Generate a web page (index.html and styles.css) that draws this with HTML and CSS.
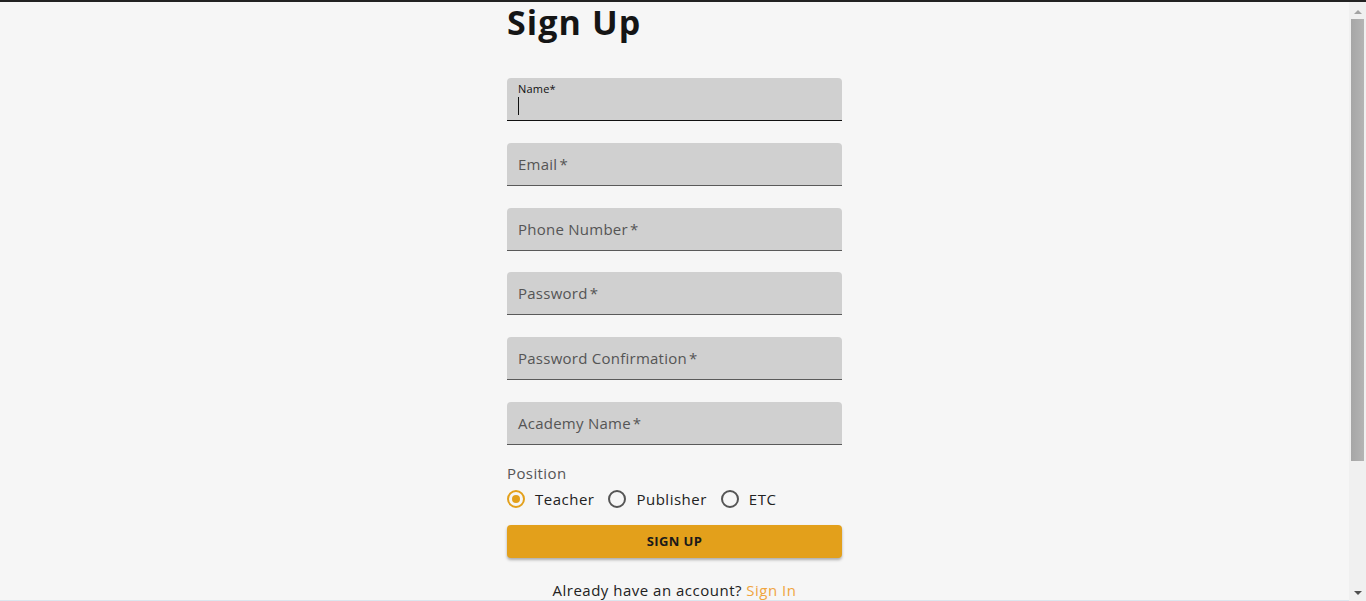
FILE: index.html
```html
<!DOCTYPE html>
<html>
<head>
<meta charset="utf-8">
<link rel="stylesheet" href="styles.css">
</head>
<body>
<div class="topline"></div>
<div class="frame">
  <div class="page">
    <div class="form">
      <h1 class="title">Sign Up</h1>
      <div class="fields">
        <div class="field focused">
          <span class="small-label">Name*</span>
          <span class="caret"></span>
        </div>
        <div class="field"><span class="label">Email<span class="ast">*</span></span></div>
        <div class="field"><span class="label">Phone Number<span class="ast">*</span></span></div>
        <div class="field"><span class="label">Password<span class="ast">*</span></span></div>
        <div class="field"><span class="label">Password Confirmation<span class="ast">*</span></span></div>
        <div class="field"><span class="label">Academy Name<span class="ast">*</span></span></div>
      </div>
      <div class="position">Position</div>
      <div class="radios">
        <label class="radio"><span class="dot checked"></span><span>Teacher</span></label>
        <label class="radio"><span class="dot"></span><span>Publisher</span></label>
        <label class="radio"><span class="dot"></span><span>ETC</span></label>
      </div>
      <button class="submit">SIGN UP</button>
      <p class="already">Already have an account? <a class="signin">Sign In</a></p>
    </div>
  </div>
  <div class="scrollbar">
    <div class="arrow up"></div>
    <div class="thumb"></div>
    <div class="arrow down"></div>
  </div>
</div>
</body>
</html>
```
FILE: styles.css
```css
html, body {
  margin: 0;
  padding: 0;
  height: 601px;
  overflow: hidden;
}
body {
  background: #f6f6f6;
  font-family: "Open Sans", "Liberation Sans", sans-serif;
  color: #222;
}
.topline {
  height: 2px;
  background: #222;
}
.frame {
  display: flex;
  height: 599px;
}
.page {
  flex: 1;
  display: flex;
  justify-content: center;
  border-bottom: 1px solid #dbe6ee;
  box-sizing: border-box;
}
.form {
  width: 335px;
}
.title {
  margin: 0;
  font-size: 34px;
  font-weight: 700;
  line-height: 40px;
  color: #151515;
  letter-spacing: 1.1px;
}
.fields {
  margin-top: 36px;
  display: flex;
  flex-direction: column;
  gap: 21.8px;
}
.field {
  position: relative;
  height: 42px;
  background: #d0d0d0;
  border-radius: 4px 4px 0 0;
  border-bottom: 1px solid #5a5a5a;
  display: flex;
  align-items: center;
  padding-left: 11px;
}
.field.focused {
  border-bottom: 1px solid #111;
  display: block;
}
.label {
  font-size: 15px;
  color: #555;
  letter-spacing: 0.25px;
}
.ast {
  margin-left: 2px;
}
.small-label {
  position: absolute;
  left: 11px;
  top: 3px;
  font-size: 11px;
  color: #111;
  letter-spacing: 0.2px;
}
.caret {
  position: absolute;
  left: 11px;
  top: 19px;
  width: 1px;
  height: 18px;
  background: #111;
}
.position {
  margin-top: 18px;
  font-size: 15px;
  color: #555;
  line-height: 20px;
  letter-spacing: 0.4px;
}
.radios {
  display: flex;
  gap: 14px;
  margin-top: 6px;
  height: 20px;
  align-items: center;
}
.radio {
  display: flex;
  align-items: center;
  gap: 10px;
  font-size: 15px;
  color: #222;
  letter-spacing: 0.5px;
}
.dot {
  width: 14px;
  height: 14px;
  border: 2px solid #555;
  border-radius: 50%;
  position: relative;
}
.dot.checked {
  border-color: #e3a01b;
}
.dot.checked::after {
  content: "";
  position: absolute;
  left: 3px;
  top: 3px;
  width: 8px;
  height: 8px;
  border-radius: 50%;
  background: #e3a01b;
}
.submit {
  display: block;
  width: 100%;
  margin-top: 16px;
  height: 33px;
  border: none;
  border-radius: 4px;
  background: #e3a01b;
  font-family: inherit;
  font-size: 13px;
  font-weight: 700;
  color: #1a1a1a;
  letter-spacing: 0.4px;
  box-shadow: 0 2px 3px rgba(0,0,0,0.3);
}
.already {
  margin: 22px 0 0;
  text-align: center;
  font-size: 15px;
  line-height: 20px;
  color: #222;
  letter-spacing: 0.5px;
}
.signin {
  color: #f0a53e;
}
.scrollbar {
  width: 17px;
  background: #f0f0f0;
  display: flex;
  flex-direction: column;
  align-items: center;
}
.arrow {
  width: 0;
  height: 0;
  border-left: 4px solid transparent;
  border-right: 4px solid transparent;
}
.arrow.up {
  margin-top: 8px;
  border-bottom: 4px solid #a3a3a3;
}
.arrow.down {
  margin-top: auto;
  margin-bottom: 6px;
  border-top: 4px solid #505050;
}
.thumb {
  margin-top: 5px;
  width: 13px;
  height: 442px;
  background: linear-gradient(to right, #a6a6a6, #b4b4b4);
}
```
